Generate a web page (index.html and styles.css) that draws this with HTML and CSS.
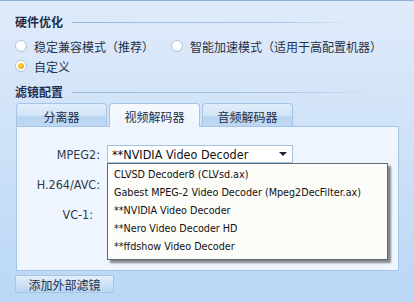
FILE: index.html
```html
<!DOCTYPE html>
<html>
<head>
<meta charset="utf-8">
<link rel="stylesheet" href="styles.css">
</head>
<body>
<div class="app">
  <div class="section-head"><span class="title">硬件优化</span><span class="rule rule-1"></span></div>
  <div class="radio-row">
    <label class="radio"><span class="dot"></span><span>稳定兼容模式（推荐）</span></label>
    <label class="radio radio-2"><span class="dot"></span><span>智能加速模式（适用于高配置机器）</span></label>
  </div>
  <div class="radio-row">
    <label class="radio"><span class="dot checked"></span><span>自定义</span></label>
  </div>
  <div class="section-head head-2"><span class="title">滤镜配置</span><span class="rule rule-2"></span></div>
  <div class="tabs">
    <div class="tab">分离器</div>
    <div class="tab active">视频解码器</div>
    <div class="tab">音频解码器</div>
  </div>
  <div class="panel">
    <div class="field">
      <span class="label">MPEG2:</span>
      <div class="select-wrap">
        <div class="select"><span>**NVIDIA Video Decoder</span><span class="arrow"></span></div>
        <ul class="dropdown">
          <li>CLVSD Decoder8 (CLVsd.ax)</li>
          <li>Gabest MPEG-2 Video Decoder (Mpeg2DecFilter.ax)</li>
          <li>**NVIDIA Video Decoder</li>
          <li>**Nero Video Decoder HD</li>
          <li>**ffdshow Video Decoder</li>
        </ul>
      </div>
    </div>
    <div class="field">
      <span class="label">H.264/AVC:</span>
    </div>
    <div class="field">
      <span class="label label-vc">VC-1:</span>
    </div>
  </div>
  <div class="btn">添加外部滤镜</div>
</div>
</body>
</html>
```

FILE: styles.css
```css
* { box-sizing: border-box; }
html, body { margin: 0; padding: 0; }
body {
  width: 414px;
  height: 302px;
  overflow: hidden;
  font-family: "DejaVu Sans Condensed", "Liberation Sans", "Noto Sans CJK SC", sans-serif;
  font-size: 11px;
  color: #26344a;
  background: linear-gradient(to bottom, #dfebfa 0%, #cfe2f8 45%, #b9d7f5 100%);
  border-top: 1px solid #93b0d3;
}
.app {
  padding: 14px 0 0 15px;
  display: flex;
  flex-direction: column;
  align-items: flex-start;
}
.section-head {
  display: flex;
  align-items: center;
  height: 14px;
  width: 100%;
}
.title {
  font-family: "Noto Sans CJK SC", sans-serif;
  font-weight: bold;
  font-size: 12px;
  color: #1f2f4f;
  line-height: 14px;
}
.rule {
  height: 1px;
  margin-left: 9px;
  background: linear-gradient(to right, #9db8da 0%, #a9c2e2 70%, rgba(200,220,245,0) 100%);
}
.rule-1 { width: 282px; }
.rule-2 { width: 300px; }
.head-2 { margin-top: 9px; }
.radio-row {
  display: flex;
  align-items: center;
  height: 20px;
}
.section-head + .radio-row { margin-top: 7px; }
.radio {
  display: flex;
  align-items: center;
  font-family: "Noto Sans CJK SC", sans-serif;
  font-size: 12px;
  color: #25324a;
}
.radio-2 { margin-left: 17px; }
.dot {
  width: 12px;
  height: 12px;
  border-radius: 50%;
  border: 1px solid #b2c6dc;
  background: radial-gradient(circle at 50% 40%, #ffffff 0%, #ffffff 50%, #e6eef7 100%);
  margin-right: 7px;
  position: relative;
}
.dot.checked::after {
  content: "";
  position: absolute;
  left: 2px;
  top: 2px;
  width: 6px;
  height: 6px;
  border-radius: 50%;
  background: radial-gradient(circle at 40% 35%, #ffd23c 0%, #f0a400 100%);
}
.tabs {
  display: flex;
  gap: 2px;
  margin-top: 4px;
  margin-left: 1px;
  height: 23px;
  position: relative;
  z-index: 1;
}
.tab {
  width: 91px;
  height: 23px;
  border: 1px solid #a6c5e6;
  border-bottom: none;
  border-radius: 4px 4px 0 0;
  background: linear-gradient(to bottom, #e2eefb 0%, #d0e3f7 55%, #bad5f1 56%, #bfd8f3 100%);
  font-family: "Noto Sans CJK SC", sans-serif;
  font-size: 12px;
  color: #23304a;
  display: flex;
  align-items: center;
  justify-content: center;
  padding-top: 3px;
}
.tab.active {
  background: linear-gradient(to bottom, #f6faff 0%, #eef5fe 100%);
  height: 24px;
  margin-bottom: -1px;
  padding-top: 2px;
}
.panel {
  margin-left: 1px;
  width: 383px;
  height: 145px;
  border: 1px solid #a6c5e6;
  background: #eef5fe;
  padding-top: 18px;
  display: flex;
  flex-direction: column;
  gap: 12px;
}
.field {
  display: flex;
  align-items: center;
  height: 18px;
}
.label {
  width: 83px;
  text-align: right;
  color: #2d3a4e;
  margin-right: 7px;
  font-size: 12.5px;
}
.label-vc { padding-right: 7px; }
.select-wrap {
  position: relative;
}
.select {
  width: 186px;
  height: 18px;
  border: 1px solid #a3c1e0;
  background: #ffffff;
  display: flex;
  align-items: center;
  justify-content: space-between;
  padding-left: 4px;
  padding-right: 5px;
  color: #111;
  font-size: 12.5px;
}
.arrow {
  width: 0;
  height: 0;
  border-left: 4px solid transparent;
  border-right: 4px solid transparent;
  border-top: 4px solid #1a2233;
}
.dropdown {
  position: absolute;
  left: 0;
  top: 18px;
  width: 281px;
  margin: 0;
  padding: 2px 0 3px;
  list-style: none;
  background: #fcfcf8;
  border: 1px solid #5f6a78;
  box-shadow: 3px 3px 2px rgba(0,0,0,0.45);
  z-index: 5;
  font-size: 10.7px;
}
.dropdown li {
  height: 18px;
  line-height: 18px;
  padding-left: 6px;
  color: #111;
  white-space: nowrap;
}
.btn {
  margin-top: 4px;
  width: 99px;
  height: 18px;
  border: 1px solid #a6c4e4;
  background: linear-gradient(to bottom, #e4effb 0%, #cfe1f6 50%, #bcd5f0 100%);
  font-family: "Noto Sans CJK SC", sans-serif;
  font-size: 12px;
  color: #23304a;
  display: flex;
  align-items: center;
  justify-content: center;
}
```
